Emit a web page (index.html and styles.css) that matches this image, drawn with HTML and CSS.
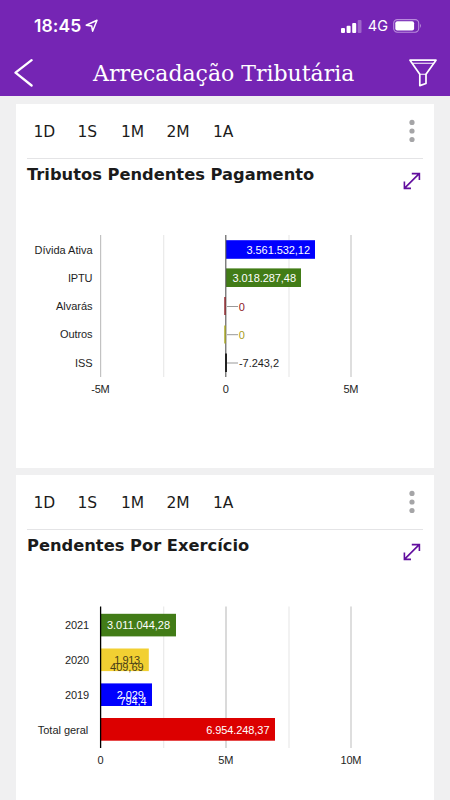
FILE: index.html
```html
<!DOCTYPE html>
<html lang="pt-BR">
<head>
<meta charset="utf-8">
<title>Arrecadação Tributária</title>
<link rel="stylesheet" href="styles.css">
</head>
<body>
<header class="header">
  <div class="status">
    <span class="clock">18:45</span>
    <svg class="location" width="14" height="14" viewBox="0 0 14 14"><path d="M1.2 6.2 12 1.3 7.6 12.2 6.7 7.1Z"/></svg>
    <svg class="signal" width="21" height="14" viewBox="0 0 21 14"><rect x="0" y="9" width="4" height="5" rx="1"/><rect x="5.6" y="6.8" width="4" height="7.2" rx="1"/><rect x="11.2" y="4" width="4" height="10" rx="1"/><rect x="16.7" y="1" width="3.8" height="13" rx="1" opacity=".3"/></svg>
    <span class="network">4G</span>
    <svg class="battery" width="30" height="14" viewBox="0 0 30 14"><rect class="shell" x=".7" y=".6" width="25" height="12.6" rx="3.6"/><rect x="2.3" y="2.3" width="18.8" height="9.2" rx="2"/><path d="M27 4.8q2 1.9 0 4.2Z" opacity=".45"/></svg>
  </div>
  <div class="navbar">
    <svg class="back" width="20" height="30" viewBox="0 0 20 30"><path d="M17.6 2.2 1.5 14.7 17.6 27.5"/></svg>
    <h1 class="page-title">Arrecadação Tributária</h1>
    <svg class="filter" width="28" height="30" viewBox="0 0 28 30"><path d="M1 2.2H27L17 16.2V25.5L10.8 27.6V16.2Z"/><path class="thin" d="M3.5 5.3H24M10.8 16.2H17"/></svg>
  </div>
</header>
<main class="cards">
  <section class="card">
    <nav class="tabs"><span>1D</span><span>1S</span><span>1M</span><span>2M</span><span>1A</span>
      <svg class="more" width="6" height="24" viewBox="0 0 6 24"><circle cx="3" cy="3.4" r="2.6"/><circle cx="3" cy="12" r="2.6"/><circle cx="3" cy="20.5" r="2.6"/></svg>
    </nav>
    <div class="card-head">
      <h2 class="card-title">Tributos Pendentes Pagamento</h2>
      <svg class="expand" width="18" height="18" viewBox="0 0 18 18"><path d="M1.4 16.4 16.2 1.6M8.8 1.6H16.4V8M1.4 9.6V16.4H8"/></svg>
    </div>
    <svg class="chart" width="418" height="180" viewBox="16 225 418 180">
      <path class="major" d="M100.6 235V377"/>
      <path class="minor" d="M163.7 235V377M289 235V377"/>
      <path class="major wide" d="M351 235V377"/>
      <rect x="226" y="240.2" width="89" height="18.6" fill="#0000fe"/>
      <rect x="226" y="268.4" width="75" height="18.6" fill="#427c17"/>
      <path class="zero" d="M225.8 235V377"/>
      <path d="M225 297V315" stroke="#8e2026" stroke-width="1.4"/>
      <path d="M225 325.5V343.5" stroke="#a8a51a" stroke-width="1.4"/>
      <path d="M226 353.5V372" stroke="#222" stroke-width="2"/>
      <path class="leader" d="M227 306.5H238M227 334.7H238M227 363H238"/>
      <g class="end">
        <text x="92.5" y="254.2" textLength="58">Dívida Ativa</text>
        <text x="92.5" y="282.3" textLength="24.5">IPTU</text>
        <text x="92.5" y="310.3" textLength="36.5">Alvarás</text>
        <text x="92.5" y="338.3" textLength="32.5">Outros</text>
        <text x="92.5" y="366.5" textLength="17.5">ISS</text>
        <text class="light" x="310" y="254" textLength="63.5">3.561.532,12</text>
        <text class="light" x="296" y="282" textLength="63.5">3.018.287,48</text>
      </g>
      <text x="238.7" y="310.5" fill="#8e2026">0</text>
      <text x="238.7" y="338.7" fill="#a89d20">0</text>
      <text x="239" y="367" textLength="40">-7.243,2</text>
      <g class="mid">
        <text x="100.5" y="393" textLength="18.5">-5M</text>
        <text x="225.7" y="393">0</text>
        <text x="351" y="393" textLength="15">5M</text>
      </g>
    </svg>
  </section>
  <section class="card">
    <nav class="tabs"><span>1D</span><span>1S</span><span>1M</span><span>2M</span><span>1A</span>
      <svg class="more" width="6" height="24" viewBox="0 0 6 24"><circle cx="3" cy="3.4" r="2.6"/><circle cx="3" cy="12" r="2.6"/><circle cx="3" cy="20.5" r="2.6"/></svg>
    </nav>
    <div class="card-head">
      <h2 class="card-title">Pendentes Por Exercício</h2>
      <svg class="expand" width="18" height="18" viewBox="0 0 18 18"><path d="M1.4 16.4 16.2 1.6M8.8 1.6H16.4V8M1.4 9.6V16.4H8"/></svg>
    </div>
    <svg class="chart" width="418" height="180" viewBox="16 596 418 180">
      <path class="minor" d="M163.7 606.5V748M289 606.5V748"/>
      <path class="major" d="M226 606.5V748"/>
      <path class="major wide" d="M351 606.5V748"/>
      <rect x="101" y="613.8" width="75" height="22.6" fill="#427c17"/>
      <rect x="101" y="648.5" width="47.8" height="22.6" fill="#f2d032"/>
      <rect x="101" y="683.4" width="51" height="22.6" fill="#0000fe"/>
      <rect x="101" y="718" width="174" height="22.7" fill="#dc0000"/>
      <path d="M100.6 606.5V748" stroke="#000" stroke-width="1.3"/>
      <g class="end">
        <text x="89" y="629" textLength="24">2021</text>
        <text x="89" y="664" textLength="24">2020</text>
        <text x="89" y="699" textLength="24">2019</text>
        <text x="88.3" y="734" textLength="50.5">Total geral</text>
        <text class="light" x="170" y="629.2" textLength="63">3.011.044,28</text>
        <text class="dark" x="140.2" y="664" textLength="26">1.913</text>
        <text class="dark" x="143.6" y="670.5" textLength="33.5">409,69</text>
        <text class="light" x="143.8" y="699" textLength="27">2.029</text>
        <text class="light" x="146.5" y="705.3" textLength="27">794,4</text>
        <text class="light" x="269.5" y="733.8" textLength="63.3">6.954.248,37</text>
      </g>
      <g class="mid">
        <text x="100.5" y="764">0</text>
        <text x="225.8" y="764" textLength="15">5M</text>
        <text x="351" y="764" textLength="21">10M</text>
      </g>
    </svg>
  </section>
</main>
</body>
</html>
```
FILE: styles.css
```css
* { box-sizing: border-box; margin: 0; }
body {
  height: 800px;
  overflow: hidden;
  background: #f0f0f1;
  font-family: "DejaVu Sans", sans-serif;
  color: #1b1b1b;
}
.header { height: 96px; background: #7525b4; color: #fff; }
.status {
  display: flex;
  height: 51px;
  align-items: center;
  padding: 0 27px 0 34px;
  font-family: Inter, sans-serif;
}
.status svg { fill: #fff; }
.clock { font-size: 17.5px; font-weight: 600; letter-spacing: .1px; }
.status .location { margin-left: 4px; fill: none; stroke: #fff; stroke-width: 1.5; stroke-linejoin: round; }
.signal { margin-left: auto; }
.network { margin: 0 5px 0 6px; font-size: 14.5px; }
.battery .shell { fill: none; stroke: #b98bdc; stroke-width: 1.1; }
.navbar {
  display: flex;
  height: 43px;
  align-items: center;
  padding: 0 13px 0 14px;
}
.navbar svg { flex: none; fill: none; stroke: #fff; stroke-width: 2.3; stroke-linecap: round; stroke-linejoin: round; }
.navbar .filter { margin-left: auto; stroke-width: 1.7; }
.filter .thin { stroke-width: 1.1; }
.page-title {
  margin-left: 59px;
  padding-top: 1px;
  font-family: "Roboto Slab", "DejaVu Serif", serif;
  font-size: 22px;
  font-weight: 400;
  white-space: nowrap;
}
.cards { display: flex; flex-direction: column; gap: 7px; padding: 8px 16px 0; }
.card { height: 364px; background: #fff; flex: none; }
.tabs {
  display: grid;
  grid-template-columns: 44px 43.5px 45.5px 46.5px 1fr auto;
  align-items: center;
  height: 55px;
  margin: 0 11px;
  padding: 0 8px 0 6.5px;
  border-bottom: 1px solid #e4e4e6;
  font-size: 15.5px;
}
.tabs span { padding-top: 2px; }
.more { fill: #a5a5a7; }
.card-head { display: flex; justify-content: space-between; height: 66px; padding: 0 13px 0 11px; }
.card-title { padding-top: 6px; font-size: 16.3px; font-weight: 700; line-height: 20px; white-space: nowrap; }
.expand { margin-top: 13px; fill: none; stroke: #620e9e; stroke-width: 1.6; }
.chart { display: block; font-family: "Liberation Sans", sans-serif; font-size: 11px; fill: #1e1e1e; }
.major { stroke: #c2c2c2; stroke-width: 1.2; }
.minor { stroke: #e9e9e9; stroke-width: 1.2; }
.major.wide { stroke: #dedede; stroke-width: 2; }
.zero { stroke: #555; stroke-width: 1.1; }
.leader { stroke: #999; stroke-width: 1; }
.end { text-anchor: end; }
.mid { text-anchor: middle; }
.light { fill: #fff; }
.dark { fill: #493f18; }
```
